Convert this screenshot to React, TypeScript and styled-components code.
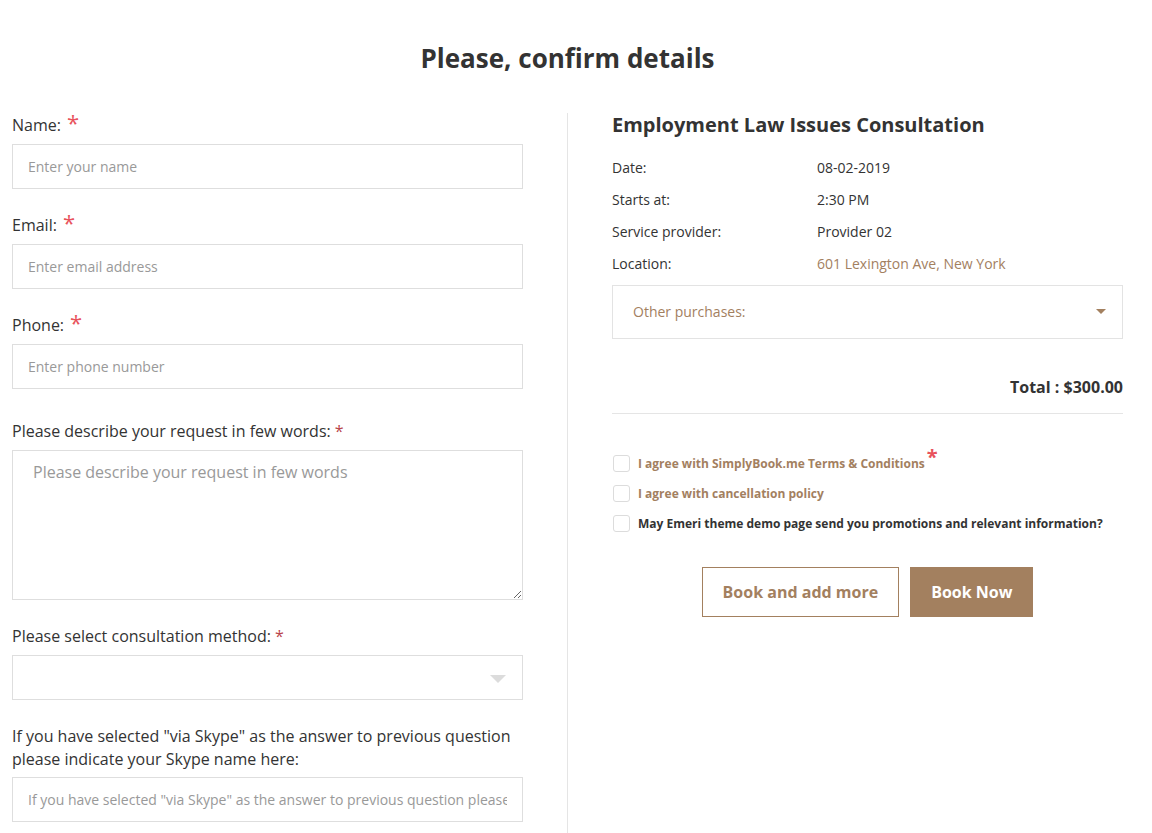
import React from "react";
import styled, { createGlobalStyle } from "styled-components";

const Global = createGlobalStyle`
  html, body { margin: 0; padding: 0; background: #fff; }
  body { font-family: "Open Sans", "Liberation Sans", sans-serif; color: #333; }
  * { box-sizing: border-box; }
`;

const BROWN = "#a3805f";

const Page = styled.div`
  width: 1152px;
  height: 833px;
  overflow: hidden;
  padding: 0 29px 0 12px;
`;

const Title = styled.h1`
  margin: 0;
  padding-top: 40px;
  height: 113px;
  text-align: center;
  font-size: 26px;
  line-height: 36px;
  font-weight: 700;
  color: #333;
`;

const Columns = styled.div`
  display: grid;
  grid-template-columns: 556px 1fr;
`;

const LeftCol = styled.div`
  padding-right: 45px;
  border-right: 1px solid #e5e5e5;
  min-height: 720px;
`;

const RightCol = styled.div`
  padding-left: 44px;
`;

const Field = styled.div<{ $mb?: number }>`
  margin-bottom: ${(p) => p.$mb ?? 24}px;
`;

const Label = styled.div<{ $mb?: number }>`
  font-size: 16px;
  line-height: 23px;
  padding-top: 1px;
  color: #333;
  margin-bottom: ${(p) => p.$mb ?? 7}px;
`;

const BigStar = styled.span`
  color: #e8525c;
  font-size: 22px;
  margin-left: 6px;
  line-height: 0;
`;

const SmallStar = styled.span`
  color: #b9444a;
  font-size: 16px;
  margin-left: 4px;
`;

const Input = styled.input`
  display: block;
  width: 511px;
  height: 45px;
  border: 1px solid #dedede;
  padding: 0 15px;
  font-family: inherit;
  font-size: 14px;
  color: #333;
  outline: none;
  &::placeholder { color: #999; }
`;

const TextArea = styled.textarea`
  display: block;
  width: 511px;
  height: 150px;
  border: 1px solid #dedede;
  padding: 10px 20px;
  font-family: inherit;
  font-size: 16px;
  line-height: 23px;
  color: #333;
  outline: none;
  resize: vertical;
  &::placeholder { color: #999; }
`;

const SelectBox = styled.div`
  position: relative;
  width: 511px;
  height: 45px;
  border: 1px solid #dedede;
`;

const Caret = styled.span<{ $color: string; $size: number; $right: number }>`
  position: absolute;
  right: ${(p) => p.$right}px;
  top: 50%;
  margin-top: -3px;
  width: 0;
  height: 0;
  border-left: ${(p) => p.$size}px solid transparent;
  border-right: ${(p) => p.$size}px solid transparent;
  border-top: ${(p) => p.$size}px solid ${(p) => p.$color};
`;

const Heading = styled.h2`
  margin: 0 0 15px;
  font-size: 20px;
  line-height: 24px;
  font-weight: 700;
  color: #333;
`;

const InfoRow = styled.div`
  display: grid;
  grid-template-columns: 205px 1fr;
  font-size: 14px;
  line-height: 32px;
  color: #333;
`;

const Value = styled.span<{ $link?: boolean }>`
  color: ${(p) => (p.$link ? BROWN : "#333")};
`;

const Purchases = styled.div`
  position: relative;
  margin-top: 5px;
  height: 54px;
  border: 1px solid #e3e3e3;
  padding: 0 20px 1px;
  display: flex;
  align-items: center;
  font-size: 14px;
  color: ${BROWN};
`;

const Total = styled.div`
  margin-top: 36px;
  text-align: right;
  font-size: 16px;
  font-weight: 700;
  line-height: 24px;
  color: #333;
  padding-bottom: 14px;
  border-bottom: 1px solid #e5e5e5;
`;

const Checks = styled.div`
  margin-top: 41px;
  padding-left: 1px;
  display: flex;
  flex-direction: column;
  gap: 13px;
`;

const CheckRow = styled.label<{ $link?: boolean }>`
  display: flex;
  align-items: center;
  gap: 8px;
  font-size: 12px;
  font-weight: 700;
  line-height: 17px;
  color: ${(p) => (p.$link ? BROWN : "#333")};
`;

const Box = styled.span`
  width: 17px;
  height: 17px;
  border: 1px solid #dcdcdc;
  border-radius: 3px;
  flex: none;
`;

const CheckStar = styled.span`
  color: #e8525c;
  font-size: 20px;
  position: relative;
  top: -4px;
  margin-left: 2px;
  line-height: 0;
`;

const Buttons = styled.div`
  margin-top: 35px;
  display: flex;
  justify-content: center;
  gap: 11px;
`;

const Button = styled.button<{ $primary?: boolean }>`
  height: 50px;
  padding: 0 20px;
  border: 1px solid ${BROWN};
  background: ${(p) => (p.$primary ? BROWN : "#fff")};
  color: ${(p) => (p.$primary ? "#fff" : BROWN)};
  font-family: inherit;
  font-size: 16px;
  font-weight: 700;
  cursor: pointer;
`;

export default function App() {
  return (
    <Page>
      <Global />
      <Title>Please, confirm details</Title>
      <Columns>
        <LeftCol>
          <Field>
            <Label>
              Name:<BigStar>*</BigStar>
            </Label>
            <Input placeholder="Enter your name" />
          </Field>
          <Field>
            <Label>
              Email:<BigStar>*</BigStar>
            </Label>
            <Input placeholder="Enter email address" />
          </Field>
          <Field $mb={30}>
            <Label>
              Phone:<BigStar>*</BigStar>
            </Label>
            <Input placeholder="Enter phone number" />
          </Field>
          <Field>
            <Label>
              Please describe your request in few words:<SmallStar>*</SmallStar>
            </Label>
            <TextArea placeholder="Please describe your request in few words" />
          </Field>
          <Field>
            <Label>
              Please select consultation method:<SmallStar>*</SmallStar>
            </Label>
            <SelectBox>
              <Caret $color="#dcdcdc" $size={8} $right={16} />
            </SelectBox>
          </Field>
          <Field>
            <Label $mb={6}>
              If you have selected "via Skype" as the answer to previous question
              <br />
              please indicate your Skype name here:
            </Label>
            <Input placeholder={'If you have selected "via Skype" as the answer to previous question please indicate your Skype name here'} />
          </Field>
        </LeftCol>
        <RightCol>
          <Heading>Employment Law Issues Consultation</Heading>
          <InfoRow>
            <span>Date:</span>
            <Value>08-02-2019</Value>
          </InfoRow>
          <InfoRow>
            <span>Starts at:</span>
            <Value>2:30 PM</Value>
          </InfoRow>
          <InfoRow>
            <span>Service provider:</span>
            <Value>Provider 02</Value>
          </InfoRow>
          <InfoRow>
            <span>Location:</span>
            <Value $link>601 Lexington Ave, New York</Value>
          </InfoRow>
          <Purchases>
            Other purchases:
            <Caret $color={BROWN} $size={5} $right={16} />
          </Purchases>
          <Total>Total : $300.00</Total>
          <Checks>
            <CheckRow $link>
              <Box />
              <span>
                I agree with SimplyBook.me Terms &amp; Conditions<CheckStar>*</CheckStar>
              </span>
            </CheckRow>
            <CheckRow $link>
              <Box />
              <span>I agree with cancellation policy</span>
            </CheckRow>
            <CheckRow>
              <Box />
              <span>May Emeri theme demo page send you promotions and relevant information?</span>
            </CheckRow>
          </Checks>
          <Buttons>
            <Button>Book and add more</Button>
            <Button $primary>Book Now</Button>
          </Buttons>
        </RightCol>
      </Columns>
    </Page>
  );
}
